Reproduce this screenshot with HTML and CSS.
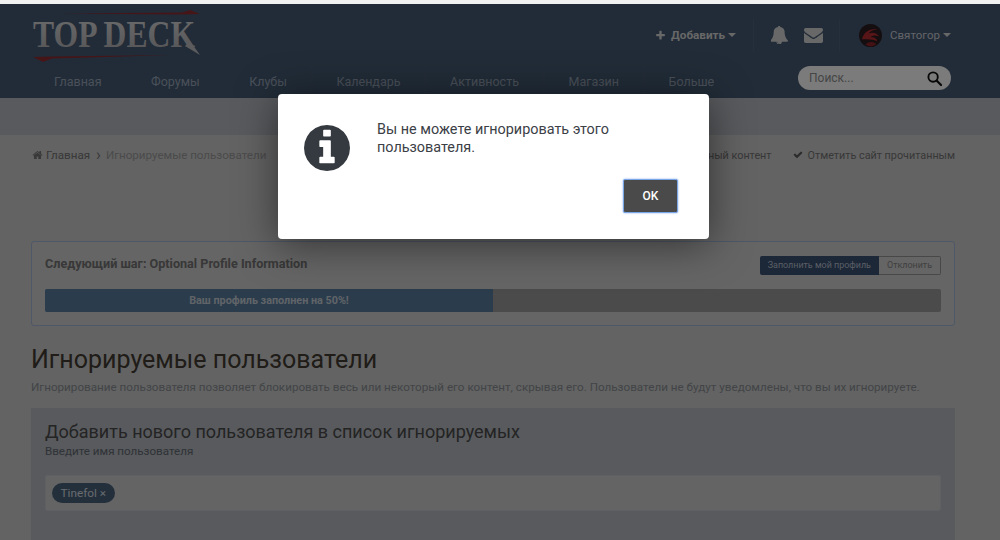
FILE: index.html
```html
<!DOCTYPE html>
<html lang="ru">
<head>
    <meta charset="UTF-8">
    <title>Игнорируемые пользователи</title>
    <link rel="stylesheet" href="styles.css">
</head>
<body>

<div class="top-strip"></div>

<header class="site-header">
    <div class="header-top">
        <svg class="logo" width="172" height="52" viewBox="0 0 172 52">
            <defs>
                <linearGradient id="logoFill" x1="0" y1="0" x2="0" y2="1">
                    <stop offset="0" stop-color="#d8d8da"/>
                    <stop offset="1" stop-color="#a8a8ac"/>
                </linearGradient>
            </defs>
            <path d="M28 2.5 L150 1.5 L158 -1 L168 3 L150 3.5 Z" fill="#8a2a30"/>
            <text x="1" y="36" font-family="Liberation Serif" font-weight="700" font-size="37" fill="url(#logoFill)" textLength="162" lengthAdjust="spacingAndGlyphs">TOP DECK</text>
            <path d="M158 30 L168 44 L153 35 Z" fill="#b8b8bc"/>
            <path d="M1 46 L20 45.5 L141 44 L20 47.5 L11 51 Z" fill="#8a2a30"/>
        </svg>
        <div class="user-bar">
            <a class="add-link">
                <svg class="ico-plus" viewBox="0 0 1792 1792"><path d="M1600 736v192q0 40-28 68t-68 28h-416v416q0 40-28 68t-68 28h-192q-40 0-68-28t-28-68v-416h-416q-40 0-68-28t-28-68v-192q0-40 28-68t68-28h416v-416q0-40 28-68t68-28h192q40 0 68 28t28 68v416h416q40 0 68 28t28 68z"/></svg>
                Добавить<span class="caret"></span>
            </a>
            <span class="divider"></span>
            <svg class="ico-bell" viewBox="128 64 1600 1664"><path d="M912 1696q0-16-16-16-59 0-101.5-42.5t-42.5-101.5q0-16-16-16t-16 16q0 73 51.5 124.5t124.5 51.5q16 0 16-16zm816-288q0 52-38 90t-90 38h-448q0 106-75 181t-181 75-181-75-75-181h-448q-52 0-90-38t-38-90q50-42 91-88t85-119.5 74.5-158.5 50-206 19.5-260q0-152 117-282.5t307-158.5q-8-19-8-39 0-40 28-68t68-28 68 28 28 68q0 20-8 39 190 28 307 158.5t117 282.5q0 139 19.5 260t50 206 74.5 158.5 85 119.5 91 88z"/></svg>
            <svg class="ico-mail" viewBox="0 256 1792 1408"><path d="M1792 710v794q0 66-47 113t-113 47h-1472q-66 0-113-47t-47-113v-794q44 49 101 87 362 246 497 345 57 42 92.5 65.5t94.5 48 110 24.5h2q51 0 110-24.5t94.5-48 92.5-65.5q170-123 498-345 57-39 100-87zm0-294q0 79-49 151t-122 123q-376 261-468 325-10 7-42.5 30.5t-54 38-52 32.5-57.5 27-50 9h-2q-23 0-50-9t-57.5-27-52-32.5-54-38-42.5-30.5q-91-64-262-182.5t-205-142.5q-62-42-117-115.5t-55-136.5q0-78 41.5-130t118.5-52h1472q65 0 112.5 47t47.5 113z"/></svg>
            <span class="divider divider-2"></span>
            <svg class="avatar" viewBox="0 0 24 24">
                <circle cx="12" cy="12" r="12" fill="#2a1c20"/>
                <path d="M3 16 C5 9 11 4 19 6 C14 6 11 8 10 10 C14 8 19 9 21 13 C17 11 13 12 12 14 C15 13 19 15 19 18 C15 16 9 16 3 16 Z" fill="#b02a30"/>
                <path d="M7 21 C10 18 15 18 18 21 C14 24 10 24 7 21 Z" fill="#8a2228"/>
            </svg>
            <a class="user-link">Святогор<span class="caret"></span></a>
        </div>
    </div>
    <div class="header-nav">
        <nav class="nav-tabs">
            <a class="nav-tab">Главная</a>
            <a class="nav-tab">Форумы</a>
            <a class="nav-tab">Клубы</a>
            <a class="nav-tab">Календарь</a>
            <a class="nav-tab">Активность</a>
            <a class="nav-tab">Магазин</a>
            <a class="nav-tab">Больше</a>
        </nav>
        <div class="search-box">
            <span>Поиск...</span>
            <svg class="ico-search" viewBox="0 0 16 16"><circle cx="6.5" cy="6.5" r="5" fill="none" stroke="#111" stroke-width="2"/><path d="M10.4 10.4 L15 15" stroke="#111" stroke-width="2.4" stroke-linecap="round"/></svg>
        </div>
    </div>
</header>

<div class="sub-band"></div>

<main class="container">
    <div class="crumbs">
        <div class="crumbs-left">
            <svg class="ico-home" viewBox="0 128 1792 1536"><path d="M1472 992v480q0 26-19 45t-45 19h-384v-384h-256v384h-384q-26 0-45-19t-19-45v-480q0-1 .5-3t.5-3l575-474 575 474q1 2 1 6zm223-69l-62 74q-8 9-21 11h-3q-13 0-21-7l-692-577-692 577q-12 8-24 7-13-2-21-11l-62-74q-8-10-7-23.5t11-21.5l719-599q32-26 76-26t76 26l244 204v-195q0-14 9-23t23-9h192q14 0 23 9t9 23v408l219 182q10 8 11 21.5t-7 23.5z"/></svg>
            <a class="crumb-home">Главная</a>
            <span class="crumb-sep">›</span>
            <span class="crumb-current">Игнорируемые пользователи</span>
        </div>
        <div class="crumbs-right">
            <a class="crumb-action">Непрочитанный контент</a>
            <a class="crumb-action">
                <svg class="ico-check" viewBox="0 256 1792 1408"><path d="M1671 566q0 40-28 68l-724 724-136 136q-28 28-68 28t-68-28l-136-136-362-362q-28-28-28-68t28-68l136-136q28-28 68-28t68 28l294 295 656-657q28-28 68-28t68 28l136 136q28 28 28 68z"/></svg>
                Отметить сайт прочитанным
            </a>
        </div>
    </div>

    <section class="next-step">
        <div class="next-step-head">
            <strong>Следующий шаг: Optional Profile Information</strong>
            <div class="btn-group">
                <a class="btn-fill">Заполнить мой профиль</a>
                <a class="btn-dismiss">Отклонить</a>
            </div>
        </div>
        <div class="progress">
            <div class="progress-bar" style="width: 50%">Ваш профиль заполнен на 50%!</div>
        </div>
    </section>

    <h1 class="page-title">Игнорируемые пользователи</h1>
    <p class="page-desc">Игнорирование пользователя позволяет блокировать весь или некоторый его контент, скрывая его. Пользователи не будут уведомлены, что вы их игнорируете.</p>

    <section class="add-panel">
        <h2>Добавить нового пользователя в список игнорируемых</h2>
        <p>Введите имя пользователя</p>
        <div class="tag-input">
            <span class="tag">Tinefol ×</span>
        </div>
    </section>
</main>

<!-- Затемнение и диалог поверх страницы -->
<div class="overlay">
    <div class="modal">
        <div class="modal-body">
            <svg class="ico-info" viewBox="0 128 1536 1536"><path d="M1024 1376v-160q0-14-9-23t-23-9h-96v-512q0-14-9-23t-23-9h-320q-14 0-23 9t-9 23v160q0 14 9 23t23 9h96v320h-96q-14 0-23 9t-9 23v160q0 14 9 23t23 9h448q14 0 23-9t9-23zm-128-896v-160q0-14-9-23t-23-9h-192q-14 0-23 9t-9 23v160q0 14 9 23t23 9h192q14 0 23-9t9-23zm640 416q0 209-103 385.5t-279.5 279.5-385.5 103-385.5-103-279.5-279.5-103-385.5 103-385.5 279.5-279.5 385.5-103 385.5 103 279.5 279.5 103 385.5z"/></svg>
            <p>Вы не можете игнорировать этого пользователя.</p>
        </div>
        <div class="modal-foot">
            <button class="btn-ok">OK</button>
        </div>
    </div>
</div>

</body>
</html>
```

FILE: styles.css
```css
html, body {
    height: 540px;
    overflow: hidden;
}
body {
    margin: 0;
    font-family: Roboto, "Liberation Sans", sans-serif;
    font-size: 12px;
    background-color: #c6c6c6;
    position: relative;
}
a {
    text-decoration: none;
}
.top-strip {
    height: 4px;
    background: #f2f2f2;
}
.site-header {
    height: 94px;
    background-color: #445870;
    padding: 0 49px 0 31px;
    box-sizing: border-box;
}
.header-top {
    height: 62px;
    display: flex;
    justify-content: space-between;
    align-items: center;
}
.logo {
    margin: 4px 0 0 1px;
    overflow: visible;
}
.user-bar {
    display: flex;
    align-items: center;
    font-size: 11.7px;
    color: #d0d0d0;
}
.add-link {
    display: flex;
    align-items: center;
    font-weight: 700;
    color: #d0d0d0;
}
.ico-plus {
    width: 11px;
    height: 11px;
    fill: #d0d0d0;
    margin-right: 5px;
}
.caret {
    display: inline-block;
    border-top: 4px solid #d0d0d0;
    border-left: 4px solid transparent;
    border-right: 4px solid transparent;
    margin-left: 3px;
}
.divider {
    width: 1px;
    height: 32px;
    background: #4c6078;
    margin: 0 17px 0 17px;
}
.divider-2 {
    margin: 0 19px 0 16px;
}
.ico-bell {
    width: 17px;
    height: 18px;
    fill: #d0d0d0;
    margin-right: 16px;
}
.ico-mail {
    width: 19px;
    height: 15px;
    fill: #d0d0d0;
}
.avatar {
    width: 23px;
    height: 23px;
    margin-right: 8px;
}
.user-link {
    display: flex;
    align-items: center;
    font-size: 11.5px;
    color: #c4c8d0;
}
.header-nav {
    height: 32px;
    display: flex;
    justify-content: space-between;
}
.nav-tabs {
    display: flex;
    gap: 3.5px;
}
.nav-tab {
    padding: 0 23px;
    font-size: 12.5px;
    line-height: 32px;
    color: #94a0b0;
    background: #46597a22;
}
.search-box {
    width: 153px;
    height: 24px;
    box-sizing: border-box;
    padding: 0 9px 0 11px;
    border-radius: 12px;
    background: #f6f6f6;
    color: #8c8c8c;
    display: flex;
    justify-content: space-between;
    align-items: center;
}
.ico-search {
    width: 15px;
    height: 15px;
}
.sub-band {
    height: 37px;
    background: #b0b4bb;
}
.container {
    margin-left: 31px;
    width: 924px;
}
.crumbs {
    height: 40px;
    display: flex;
    justify-content: space-between;
    align-items: center;
    font-size: 11.6px;
}
.crumbs-left, .crumbs-right {
    display: flex;
    align-items: center;
}
.ico-home {
    width: 11px;
    height: 10px;
    fill: #707070;
    margin-right: 3px;
    margin-left: 1px;
}
.crumb-home {
    color: #707070;
}
.crumb-sep {
    color: #707070;
    margin: 0 5px 0 6px;
    font-size: 16px;
    line-height: 14px;
}
.crumb-current {
    color: #969696;
}
.crumbs-right {
    font-size: 10.8px;
}
.crumb-action {
    color: #707070;
    margin-left: 21px;
    display: flex;
    align-items: center;
}
.ico-check {
    width: 10px;
    height: 8px;
    fill: #585858;
    margin-right: 5px;
}
.next-step {
    margin-top: 66px;
    height: 85px;
    box-sizing: border-box;
    border: 1px solid #9cb0d0;
    border-radius: 3px;
    padding: 14px 13px 0;
    background: #cacaca;
}
.next-step-head {
    height: 20px;
    display: flex;
    justify-content: space-between;
    align-items: flex-start;
}
.next-step-head strong {
    color: #707070;
    font-size: 12.6px;
    line-height: 16px;
    font-weight: 700;
}
.btn-group {
    display: flex;
    font-size: 8.95px;
    line-height: 19px;
}
.btn-fill {
    padding: 0 8px;
    background: #384f70;
    color: #b4bcc8;
    border-radius: 2px 0 0 2px;
}
.btn-dismiss {
    padding: 0 8px;
    line-height: 17px;
    border: 1px solid #909090;
    border-left: 0;
    color: #808080;
    border-radius: 0 2px 2px 0;
}
.progress {
    margin-top: 13px;
    height: 23px;
    border-radius: 2px;
    background: #969696;
    overflow: hidden;
}
.progress-bar {
    height: 23px;
    line-height: 23px;
    background: #56799a;
    color: #c0c8d0;
    font-size: 10.8px;
    font-weight: 700;
    text-align: center;
}
.page-title {
    margin: 18px 0 0;
    font-size: 25px;
    font-weight: 400;
    line-height: 32px;
    color: #403830;
}
.page-desc {
    margin: 2px 0 0;
    font-size: 11.67px;
    line-height: 18px;
    color: #84898e;
}
.add-panel {
    margin-top: 12px;
    height: 140px;
    padding: 14px 14px 0;
    background: #b0b4bb;
    box-sizing: border-box;
}
.add-panel h2 {
    margin: 0;
    font-size: 18px;
    font-weight: 400;
    line-height: 20px;
    color: #484848;
}
.add-panel p {
    margin: 0;
    font-size: 11.6px;
    line-height: 18px;
    color: #60666e;
}
.tag-input {
    margin-top: 15px;
    height: 36px;
    box-sizing: border-box;
    border: 1px solid #bcc0c8;
    border-radius: 2px;
    padding: 7px 6px;
    background: #c8c8c8;
}
.tag {
    display: inline-block;
    height: 20px;
    line-height: 20px;
    padding: 0 8.5px;
    border-radius: 10px;
    background: #466078;
    color: #d0d6de;
    font-size: 11.8px;
}
.overlay {
    position: absolute;
    top: 4px;
    left: 0;
    right: 0;
    bottom: 0;
    background: rgba(0, 0, 0, 0.5);
}
.modal {
    position: absolute;
    top: 90px;
    left: 278px;
    width: 431px;
    height: 145px;
    box-sizing: border-box;
    background: #fff;
    border-radius: 4px;
    box-shadow: 0 5px 40px rgba(0, 0, 0, 0.5);
    padding: 27px 31px 0 26px;
}
.modal-body {
    display: flex;
    gap: 27px;
    height: 58px;
}
.ico-info {
    flex: none;
    width: 46px;
    height: 46px;
    fill: #343a40;
    margin-top: 4px;
}
.modal-body p {
    margin: 0;
    font-size: 14.4px;
    line-height: 18px;
    color: #3b4046;
    width: 270px;
}
.modal-foot {
    display: flex;
    justify-content: flex-end;
}
.btn-ok {
    width: 55px;
    height: 34px;
    margin-top: 0;
    background: #4a4a4a;
    border: 1px solid #7aa6e8;
    border-radius: 2px;
    box-shadow: 0 0 2px #7aa6e8;
    color: #fff;
    font-family: Roboto, "Liberation Sans", sans-serif;
    font-size: 12px;
    font-weight: 500;
}
```
